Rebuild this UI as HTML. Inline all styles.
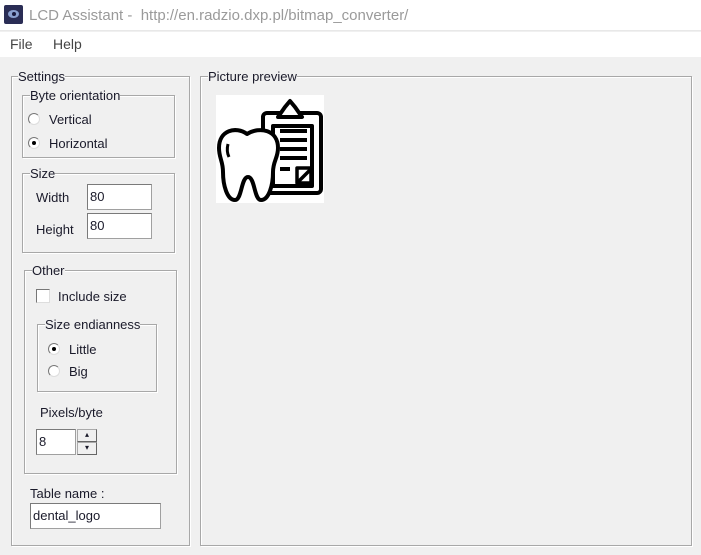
<!DOCTYPE html>
<html><head><meta charset="utf-8"><style>
*{margin:0;padding:0;box-sizing:border-box}
body{width:701px;height:555px;background:#f0f0f0;font-family:"Liberation Sans",Tahoma,sans-serif;font-size:13px;color:#1a1a2a;position:relative;overflow:hidden}
.a{position:absolute}
.gb{position:absolute;border:1px solid #a8a8a8;box-shadow:inset 1px 1px 0 #fff,1px 1px 0 #fff}
.lg{position:absolute;background:#f0f0f0;line-height:14px;white-space:nowrap}
.t{position:absolute;white-space:nowrap;line-height:15px}
.in{position:absolute;background:#fff;border:1px solid #a0a0a0;border-top-color:#7a7a7a;border-left-color:#7a7a7a;font-size:13px;line-height:24px;padding-left:2px}
.rb{position:absolute;width:12px;height:12px;border-radius:50%;background:#fff;border:1px solid #888;border-color:#777 #ddd #ddd #777}
.rb.on::after{content:"";position:absolute;left:3px;top:3px;width:4px;height:4px;border-radius:50%;background:#000}
</style></head><body>
<div class="a" style="left:0;top:0;width:701px;height:31px;background:#fff;border-bottom:1px solid #e8e8e8"></div>
<div class="a" style="left:4px;top:5px;width:19px;height:19px;background:#2a2d55;border-radius:2px"><div class="a" style="left:4px;top:5px;width:11px;height:8px;border-radius:50%;background:#8aa0d0"></div><div class="a" style="left:8px;top:7px;width:4px;height:4px;border-radius:50%;background:#1a1a40"></div></div>
<div class="t" style="left:29px;top:8px;font-size:15px;color:#9a9a9a">LCD Assistant -&nbsp; http://en.radzio.dxp.pl/bitmap_converter/</div>
<div class="a" style="left:0;top:32px;width:701px;height:25px;background:#fff"></div>
<div class="t" style="left:10px;top:37px;font-size:14px;color:#444">File</div>
<div class="t" style="left:53px;top:37px;font-size:14px;color:#444">Help</div>

<div class="gb" style="left:11px;top:76px;width:179px;height:470px"></div>
<div class="lg" style="left:18px;top:70px">Settings</div>
<div class="gb" style="left:22px;top:95px;width:153px;height:63px"></div>
<div class="lg" style="left:30px;top:89px">Byte orientation</div>
<div class="rb" style="left:28px;top:113px"></div><div class="t" style="left:49px;top:112px">Vertical</div>
<div class="rb on" style="left:28px;top:137px"></div><div class="t" style="left:49px;top:136px">Horizontal</div>

<div class="gb" style="left:22px;top:173px;width:153px;height:80px"></div>
<div class="lg" style="left:30px;top:167px">Size</div>
<div class="t" style="left:36px;top:190px">Width</div>
<div class="in" style="left:87px;top:184px;width:65px;height:26px">80</div>
<div class="t" style="left:36px;top:222px">Height</div>
<div class="in" style="left:87px;top:213px;width:65px;height:26px">80</div>

<div class="gb" style="left:24px;top:270px;width:153px;height:204px"></div>
<div class="lg" style="left:32px;top:264px">Other</div>
<div class="a" style="left:36px;top:289px;width:14px;height:14px;background:#fff;border:1px solid #888;border-color:#777 #ddd #ddd #777"></div>
<div class="t" style="left:58px;top:289px">Include size</div>
<div class="gb" style="left:37px;top:324px;width:120px;height:68px"></div>
<div class="lg" style="left:45px;top:318px">Size endianness</div>
<div class="rb on" style="left:48px;top:343px"></div><div class="t" style="left:69px;top:342px">Little</div>
<div class="rb" style="left:48px;top:365px"></div><div class="t" style="left:69px;top:364px">Big</div>
<div class="t" style="left:40px;top:405px">Pixels/byte</div>
<div class="in" style="left:36px;top:429px;width:40px;height:26px">8</div>
<div class="a" style="left:77px;top:429px;width:20px;height:13px;border:1px solid #aaa;border-right-color:#666;border-bottom-color:#666;background:#f0f0f0;font-size:8px;text-align:center;line-height:9px">▴</div>
<div class="a" style="left:77px;top:442px;width:20px;height:13px;border:1px solid #aaa;border-right-color:#666;border-bottom-color:#666;background:#f0f0f0;font-size:8px;text-align:center;line-height:9px">▾</div>

<div class="t" style="left:30px;top:486px">Table name :</div>
<div class="in" style="left:30px;top:503px;width:131px;height:26px">dental_logo</div>

<div class="gb" style="left:200px;top:76px;width:492px;height:470px"></div>
<div class="lg" style="left:208px;top:70px">Picture preview</div>
<svg class="a" style="left:216px;top:95px" width="108" height="108" viewBox="0 0 108 108">
<rect width="108" height="108" fill="#fff"/>
<g fill="none" stroke="#000" stroke-width="4" stroke-linejoin="round">
<rect x="47" y="18" width="58" height="80" rx="4"/>
<rect x="57" y="31" width="39" height="60"/>
<path d="M62 22 L69 12 L74 6 L79 12 L86 22 Z" fill="#fff"/>
<path d="M64 36 H91 M64 45 H91 M64 54 H91 M64 63 H91 M64 74 H74"/>
<path d="M81 73 H95 V88 H81 Z M82 87 L95 74" stroke-width="3.5"/>
<path d="M31 39 C20 31 3 35 3 53 C3 63 7 66 7 77 C7 90 11 105 19 105 C26 105 25 82 32 82 C39 82 38 105 45 105 C53 105 57 90 57 77 C57 66 62 63 62 53 C62 35 44 31 31 39 Z" fill="#fff"/>
<path d="M12 49 C11 53 11 58 13 62" stroke-width="3"/>
</g></svg>
</body></html>
